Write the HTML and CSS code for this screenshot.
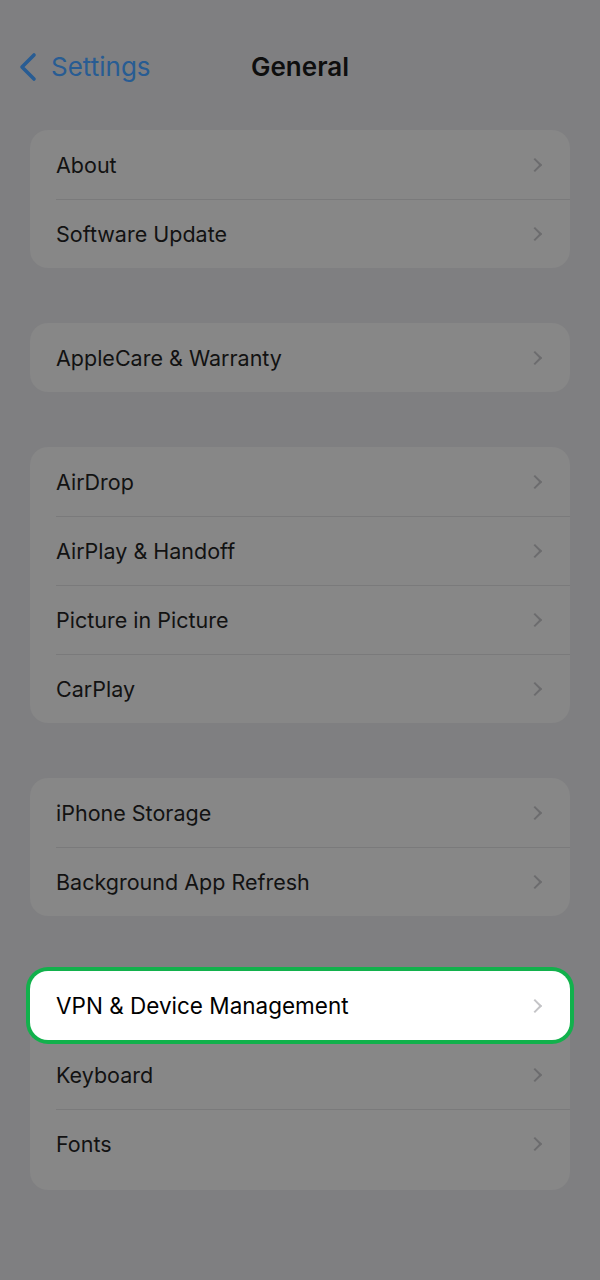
FILE: index.html
```html
<!DOCTYPE html>
<html lang="en">
<head>
    <meta charset="UTF-8">
    <meta name="viewport" content="width=device-width, initial-scale=1.0">
    <title>General</title>
    <link rel="stylesheet" href="styles.css">
</head>
<body>

<header class="nav-bar">
    <a class="back-link" href="#">
        <svg class="back-icon" width="20" height="30" viewBox="0 0 20 30">
            <path d="M16 3 L4 15 L16 27" fill="none" stroke="currentColor" stroke-width="3.6" stroke-linecap="round" stroke-linejoin="round"/>
        </svg>
        <span>Settings</span>
    </a>
    <h1 class="nav-title">General</h1>
</header>

<main class="settings">
    <ul class="group">
        <li class="row"><span>About</span><i class="chevron"></i></li>
        <li class="row"><span>Software Update</span><i class="chevron"></i></li>
    </ul>

    <ul class="group">
        <li class="row"><span>AppleCare &amp; Warranty</span><i class="chevron"></i></li>
    </ul>

    <ul class="group">
        <li class="row"><span>AirDrop</span><i class="chevron"></i></li>
        <li class="row"><span>AirPlay &amp; Handoff</span><i class="chevron"></i></li>
        <li class="row"><span>Picture in Picture</span><i class="chevron"></i></li>
        <li class="row"><span>CarPlay</span><i class="chevron"></i></li>
    </ul>

    <ul class="group">
        <li class="row"><span>iPhone Storage</span><i class="chevron"></i></li>
        <li class="row"><span>Background App Refresh</span><i class="chevron"></i></li>
    </ul>

    <ul class="group group-last">
        <li class="row row-highlight"><span>VPN &amp; Device Management</span><i class="chevron"></i></li>
        <li class="row"><span>Keyboard</span><i class="chevron"></i></li>
        <li class="row"><span>Fonts</span><i class="chevron"></i></li>
    </ul>
</main>

</body>
</html>
```

FILE: styles.css
```css
body {
    margin: 0;
    background-color: #7f7f81;
    font-family: Inter, "Noto Sans", sans-serif;
    color: #121212;
}

.nav-bar {
    display: flex;
    align-items: center;
    justify-content: center;
    position: relative;
    height: 66px;
    padding-top: 33px;
}

.back-link {
    position: absolute;
    left: 18px;
    top: 51px;
    display: flex;
    align-items: center;
    gap: 13px;
    color: #285c93;
    text-decoration: none;
    font-size: 26px;
}

.back-icon {
    display: block;
}

.nav-title {
    margin: 0;
    font-size: 26px;
    font-weight: 600;
    color: #0e0e0e;
}

.settings {
    padding: 31px 30px 0;
}

.group {
    list-style: none;
    margin: 0 0 55px;
    padding: 0;
    background-color: #878787;
    border-radius: 18px;
}

.group-last {
    padding-bottom: 12px;
}

.row {
    display: flex;
    align-items: center;
    justify-content: space-between;
    height: 69px;
    padding: 0 27px 0 26px;
    font-size: 21.5px;
    position: relative;
}

.row + .row::before {
    content: "";
    position: absolute;
    top: 0;
    left: 26px;
    right: 0;
    height: 1px;
    background-color: #7a7a7b;
}

.chevron {
    width: 8px;
    height: 8px;
    border-top: 2px solid #6c6c6e;
    border-right: 2px solid #6c6c6e;
    transform: rotate(45deg);
    margin-right: 3px;
}

.row-highlight {
    background-color: #fff;
    color: #000;
    font-size: 22.5px;
    border-radius: 18px;
    box-shadow: 0 0 0 4px #12b14c;
    z-index: 1;
}

.row-highlight .chevron {
    border-color: #c4c4c7;
}

.row-highlight + .row::before {
    display: none;
}
```
